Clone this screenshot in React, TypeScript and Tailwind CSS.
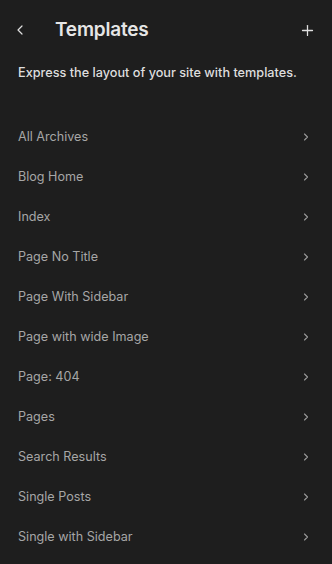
import { ChevronLeft, ChevronRight, Plus } from "lucide-react";

const templates = [
  "All Archives",
  "Blog Home",
  "Index",
  "Page No Title",
  "Page With Sidebar",
  "Page with wide Image",
  "Page: 404",
  "Pages",
  "Search Results",
  "Single Posts",
  "Single with Sidebar",
];

export default function App() {
  return (
    <div
      className="w-[332px] h-[564px] bg-[#1e1e1e] overflow-hidden"
      style={{ fontFamily: "Inter, 'Noto Sans', sans-serif" }}
    >
      <div className="flex items-center h-[60px] pl-[12px] pr-[16px]">
        <button className="w-[16px] flex items-center justify-center text-[#e0e0e0]">
          <ChevronLeft size={16} strokeWidth={1.8} />
        </button>
        <h1 className="ml-[27px] text-[19px] font-semibold text-[#e6e6e6] tracking-[-0.2px] flex-1">
          Templates
        </h1>
        <button className="text-[#e0e0e0]">
          <Plus size={17} strokeWidth={1.8} />
        </button>
      </div>
      <p className="px-[18px] pt-[3px] text-[12.7px] font-medium text-[#dedede] leading-[20px]">
        Express the layout of your site with templates.
      </p>
      <ul className="mt-[34px]">
        {templates.map((t) => (
          <li
            key={t}
            className="flex items-center justify-between h-[40px] pl-[18px] pr-[20px]"
          >
            <span className="text-[12.6px] text-[#a6a6a6]">{t}</span>
            <ChevronRight size={12} strokeWidth={2.2} className="text-[#9a9a9a]" />
          </li>
        ))}
      </ul>
    </div>
  );
}
